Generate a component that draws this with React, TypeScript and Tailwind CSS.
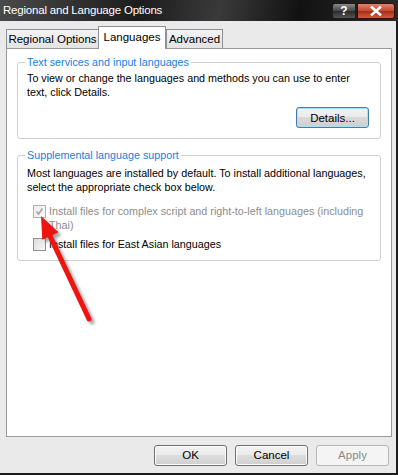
import React from "react";

const font = { fontFamily: '"Liberation Sans", Arial, sans-serif' };

function TitleBar() {
  return (
    <div className="flex h-[21px] items-center bg-[linear-gradient(100deg,#4a4a4a_0%,#1c1c1c_35%,#3a3a3a_55%,#121212_75%,#2a2a2a_100%)] pl-[3px] pr-[3px]">
      <span className="flex-1 text-[11.5px] leading-none tracking-[-0.2px] text-white">Regional and Language Options</span>
      <div className="flex items-center gap-[1px]">
        <button className="flex h-[16px] w-[24px] items-center justify-center rounded-l-[3px] border border-[#1a1a1a] bg-[linear-gradient(#8a8a8a,#444_50%,#2a2a2a_51%,#555)] text-[12px] font-bold leading-none text-white">
          ?
        </button>
        <button className="flex h-[16px] w-[38px] items-center justify-center rounded-r-[3px] border border-[#3a0c06] bg-[linear-gradient(#e0836f,#c24a32_50%,#a82d17_51%,#cf5a3c)] text-white">
          <svg width="12" height="10" viewBox="0 0 12 10">
            <path d="M2 1.5 L10 8.5 M10 1.5 L2 8.5" stroke="#ffffff" strokeWidth="2.6" strokeLinecap="square" />
          </svg>
        </button>
      </div>
    </div>
  );
}

function Tab({ label, active, w }: { label: string; active?: boolean; w: string }) {
  if (active) {
    return (
      <div className={`relative z-10 -mb-px -ml-px flex h-[23px] items-center justify-center border border-b-0 border-[#8d9096] bg-white text-[11.5px] text-black ${w}`}>
        {label}
      </div>
    );
  }
  return (
    <div className={`flex h-[19px] items-center justify-center border border-b-0 border-[#8d9096] bg-[linear-gradient(#f3f3f3,#e3e3e3)] pt-[2px] text-[11.5px] text-black ${w}`}>
      {label}
    </div>
  );
}

function Checkbox({ checked, disabled }: { checked?: boolean; disabled?: boolean }) {
  return (
    <span
      className={
        disabled
          ? "flex h-[13px] w-[13px] shrink-0 items-center justify-center border border-[#b1b1b1] bg-[linear-gradient(135deg,#ececec,#fafafa)]"
          : "flex h-[13px] w-[13px] shrink-0 items-center justify-center border border-[#8e8f8f] bg-[linear-gradient(135deg,#dcdcdc,#f8f8f8)]"
      }
    >
      {checked ? (
        <svg width="9" height="9" viewBox="0 0 9 9">
          <path d="M1.5 4.5 L3.6 7 L7.5 1.5" fill="none" stroke="#a9a9a9" strokeWidth="1.8" />
        </svg>
      ) : null}
    </span>
  );
}

function Arrow() {
  return (
    <svg className="pointer-events-none absolute left-0 top-0" width="398" height="475" viewBox="0 0 398 475">
      <defs>
        <filter id="sh" x="-50%" y="-50%" width="200%" height="200%">
          <feGaussianBlur stdDeviation="1.6" />
        </filter>
      </defs>
      <g transform="translate(3 3)" filter="url(#sh)" opacity="0.55">
        <path d="M89 319 L50 236" stroke="#555" strokeWidth="5" strokeLinecap="round" />
        <path d="M41 216 L58.5 232.2 L42.3 239.8 Z" fill="#555" />
      </g>
      <path d="M89 319 L50 236" stroke="#ee1410" strokeWidth="5" strokeLinecap="round" />
      <path d="M41 216 L58.5 232.2 L42.3 239.8 Z" fill="#ee1410" />
    </svg>
  );
}

function DialogButton({ label, disabled, focused }: { label: string; disabled?: boolean; focused?: boolean }) {
  const base = "flex h-[21px] w-[73px] items-center justify-center rounded-[3px] border text-[11.5px]";
  if (disabled) {
    return <button className={`${base} border-[#b5b8bb] bg-[#f4f4f4] text-[#8a8a8a]`}>{label}</button>;
  }
  if (focused) {
    return (
      <button className={`${base} border-[#3c7fb1] bg-[linear-gradient(#f2f2f2,#ebebeb_45%,#d9d9d9_50%,#cfcfcf)] text-black shadow-[inset_0_0_0_1px_#a6e1fa]`}>
        {label}
      </button>
    );
  }
  return (
    <button className={`${base} border-[#707070] bg-[linear-gradient(#f2f2f2,#ebebeb_45%,#dddddd_50%,#cfcfcf)] text-black shadow-[inset_0_0_0_1px_#fcfcfc]`}>
      {label}
    </button>
  );
}

export default function App() {
  return (
    <div style={font} className="relative flex h-[475px] w-[398px] flex-col overflow-hidden bg-[#eaeaea]">
      <TitleBar />
      <div className="flex flex-1 flex-col border-b-2 border-r-2 border-[#1b1b1b]">
        <div className="mt-[5px] flex h-[22px] items-end pl-[6px]">
          <Tab label="Regional Options" w="w-[93px]" />
          <Tab label="Languages" active w="w-[68px]" />
          <Tab label="Advanced" w="w-[57px]" />
        </div>
        <div className="ml-[6px] flex h-[389px] w-[386px] flex-col border border-[#9a9a9a] bg-white px-[10px] pt-[6px] text-[10.75px] leading-[14px] text-black">
          <fieldset className="flex flex-col rounded-[3px] border border-[#cfcfcf] px-0 pb-[10px]">
            <legend className="ml-[7px] px-[2px] text-[#1a80e0]">Text services and input languages</legend>
            <p className="mt-[2px] pl-[9px] pr-[8px]">
              To view or change the languages and methods you can use to enter text, click Details.
            </p>
            <div className="mt-[8px] flex justify-end pr-[11px]">
              <DialogButton label="Details..." focused />
            </div>
          </fieldset>
          <fieldset className="mt-[9px] flex flex-col rounded-[3px] border border-[#cfcfcf] pb-[9px]">
            <legend className="ml-[7px] px-[2px] text-[#1a80e0]">Supplemental language support</legend>
            <p className="mt-[4px] pl-[9px] pr-[6px]">
              Most languages are installed by default. To install additional languages, select the appropriate check box below.
            </p>
            <div className="mt-[10px] flex items-start gap-[3px] pl-[15px] pr-[10px]">
              <span className="mt-px">
                <Checkbox checked disabled />
              </span>
              <span className="text-[#8d8d8d]">
                Install files for complex script and right-to-left languages (including Thai)
              </span>
            </div>
            <div className="mt-[5px] flex items-start gap-[3px] pl-[15px]">
              <span className="mt-px">
                <Checkbox />
              </span>
              <span>Install files for East Asian languages</span>
            </div>
          </fieldset>
        </div>
        <div className="mt-[8px] flex justify-end gap-[8px] pr-[7px]">
          <DialogButton label="OK" />
          <DialogButton label="Cancel" />
          <DialogButton label="Apply" disabled />
        </div>
      </div>
      <Arrow />
    </div>
  );
}
